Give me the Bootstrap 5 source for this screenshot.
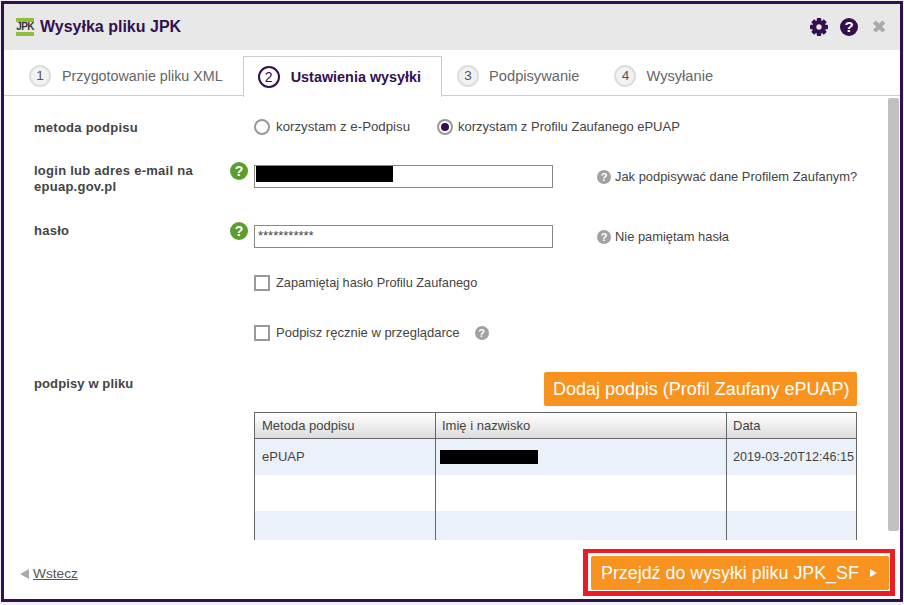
<!DOCTYPE html>
<html lang="pl">
<head>
<meta charset="utf-8">
<title>Wysyłka pliku JPK</title>
<link href="https://cdn.jsdelivr.net/npm/bootstrap@5.3.0/dist/css/bootstrap.min.css" rel="stylesheet">
<style>
html,body{height:100%;overflow:hidden}
body{background:#f1f0f3;font-family:"Liberation Sans",Arial,sans-serif;color:#444;font-size:13px;padding:1px 0 0 1px}
.okno{width:902px;height:601px;border:3px solid #32104f;background:#fff;display:flex;flex-direction:column;overflow:hidden}
.nagl{height:46px;flex:none;background:#e8e8e8;padding:0 13px 0 12px}
.logo{width:18px;height:18px;border-top:4px solid #8dbf3f;border-bottom:4px solid #8dbf3f;font:700 10px/10px "Liberation Sans",sans-serif;color:#333;display:flex;align-items:center;justify-content:center;letter-spacing:-.7px;margin-right:6px}
.tytul{font-size:16px;font-weight:700;color:#32104f;line-height:20px;margin:0}
.ikony{gap:12px}
.pytaj{width:18px;height:18px;border-radius:50%;background:#32104f;color:#fff;font:700 15px/18px "Liberation Sans",sans-serif;text-align:center}
.krzyz{color:#a9a9a9;font:700 18px/18px "DejaVu Sans",sans-serif;width:16px;text-align:center;margin-left:1px}
.zakladki{height:46px;flex:none;border-bottom:1px solid #ccc;padding:6px 0 0 9px}
.zakl{height:40px;padding:0 18px 0 16px;display:flex;align-items:center;color:#666;font-size:14.32px}
.zakl-dalej{font-size:14.65px;padding-right:19px}
.zakl-akt{border:1px solid #ccc;border-bottom:0;background:#fff;height:41px;color:#32104f;font-weight:700;margin-left:2px;margin-right:-1px;padding:0 20px 0 14px;font-size:14.4px}
.tekst{padding-top:1px}
.nr{width:22px;height:22px;border-radius:50%;border:2px solid #ddd;background:#f2f2f2;display:flex;align-items:center;justify-content:center;font-size:13.5px;font-weight:400;color:#555;margin-right:11px}
.zakl-dalej .nr{margin-right:10px}
.zakl-akt .nr{border-color:#32104f;background:#fff;color:#32104f;font-size:14px}
.srodek{height:444px;flex:none;overflow:hidden}
.tresc{flex:1;padding:21px 0 0 30px;min-width:0}
.suwak{width:12px;flex:none;padding:2px 1px 0 0}
.uchwyt{height:433px;background:#c1c1c1;border-radius:2px}
.wiersz{display:flex}
.etyk{width:196px;flex:none;font-weight:700;font-size:13px;letter-spacing:.26px;line-height:16px;color:#444}
.pomoc{width:24px;flex:none}
.zielony{width:18px;height:18px;border-radius:50%;background:#5b9e2d;color:#fff;font:700 14px/18px "Liberation Sans",sans-serif;text-align:center;display:block;margin-top:-3px}
.szary{display:inline-block;width:14px;height:14px;border-radius:50%;background:#a1a1a1;color:#fff;font:700 11px/14px "Liberation Sans",sans-serif;text-align:center;flex:none}
.pole{width:299px;height:23px;border:1px solid #888;padding:0 3px;font-size:13px;line-height:20px;color:#444;flex:none}
.czarny{background:#000;display:block}
.kryty{margin-left:-2px}
.rz1{height:20px;align-items:center}
.rz1 .etyk{padding-top:1px}
.rz2{margin-top:28px;height:60px}
.rz2 .etyk,.rz3 .etyk{margin-top:-3px;padding-top:1px}
.rz3,.rz4{height:50px}
.rz5{height:47px}
.rz6{height:40px}
.rz6 .etyk{letter-spacing:.12px}
.wybor{display:inline-flex;align-items:center;gap:6px;font-size:13px;line-height:16px}
.rz4 .wybor{font-size:12.75px}
.rz5 .szary{margin-left:9px!important}
.rz1 .wybor{font-size:13.25px}
.rz1 .drugi{margin-left:27px;gap:5px;font-size:13px}
.radio{width:16px;height:16px;border-radius:50%;border:2px solid #999;background:#fff;display:block;flex:none}
.radio-on{position:relative}
.radio-on::after{content:"";position:absolute;inset:2px;border-radius:50%;background:#32104f}
.check{width:16px;height:16px;border:2px solid #999;display:block;flex:none;background:#fff}
.boczny{margin-left:44px;padding-top:1px;gap:4px;font-size:12.9px;display:flex;align-items:center;height:22px;white-space:nowrap}
.pomar{background:#f7931e;border:0;border-radius:2px;color:#fff;font-size:18px;letter-spacing:-.02px;line-height:34px;height:34px;padding:0 8px 0 9px;white-space:nowrap;width:313px}
.pomar:hover{background:#f7931e;color:#fff}
.tabela{width:603px;table-layout:fixed;margin:0;border:1px solid #666;border-bottom:0;border-collapse:separate;border-spacing:0;color:#444;font-size:13px}
.tabela th{font-weight:400;height:26px;padding:0 7px;border-bottom:1px solid #666;border-right:1px solid #666;background:linear-gradient(#fff,#dcdcdc);vertical-align:middle;box-shadow:none;color:#444}
.tabela th:nth-child(2){padding-left:6px}
.tabela th:last-child{padding-left:6px}
.tabela td{height:36px;padding:0 7px;border:0;border-right:1px solid #666;vertical-align:middle;box-shadow:none;color:#444;background:#fff;white-space:nowrap}
.tabela td.dat{padding:0 0 0 6px;font-size:12.58px}
.tabela td.zakr{padding-left:4px}
.tabela th:last-child,.tabela td:last-child{border-right:0}
.tabela tr.nieb td{background:#ebf1f9}
.stopka{flex:1;padding:9px 5px 3px 16px}
.wstecz{color:#555;font-size:13.7px;gap:4px;margin-top:3px}
.wstecz a{color:#555}
.tri-l{width:0;height:0;border:5px solid transparent;border-right:9px solid #aaa;border-left:0}
.ramka{border:5px solid #ec1c24;border-top-width:4px;padding:3px 1px 1px 3px;background:#fff;height:47px;width:312px;display:flex}
.dalej{height:34px;width:298px;font-size:17.85px;line-height:34px;padding:0 0 0 10px;text-align:left;display:flex;align-items:center;background:#f7931e;border:0;border-radius:2px;color:#fff;white-space:nowrap}
.dalej:hover{background:#f7931e;color:#fff}
.tri-p{width:0;height:0;border:4.5px solid transparent;border-left:7px solid #fff;border-right:0;margin-left:11px}
</style>
</head>
<body>
<div class="okno">
  <div class="nagl d-flex align-items-center justify-content-between">
    <div class="d-flex align-items-center">
      <span class="logo">JPK</span>
      <h1 class="tytul">Wysyłka pliku JPK</h1>
    </div>
    <div class="ikony d-flex align-items-center">
      <svg width="18" height="18" viewBox="0 0 18 18" aria-hidden="true"><g fill="#32104f"><circle cx="9" cy="9" r="6.8"/><rect x="6.8" y="0" width="4.400" height="18" rx=".8"/><rect x="6.8" y="0" width="4.400" height="18" rx=".8" transform="rotate(45 9 9)"/><rect x="6.8" y="0" width="4.400" height="18" rx=".8" transform="rotate(90 9 9)"/><rect x="6.8" y="0" width="4.400" height="18" rx=".8" transform="rotate(135 9 9)"/></g><circle cx="9" cy="9" r="2.700" fill="#e8e8e8"/></svg>
      <span class="pytaj">?</span>
      <span class="krzyz">✖</span>
    </div>
  </div>
  <div class="zakladki d-flex">
    <div class="zakl"><span class="nr">1</span><span class="tekst">Przygotowanie pliku XML</span></div>
    <div class="zakl zakl-akt"><span class="nr">2</span><span class="tekst">Ustawienia wysyłki</span></div>
    <div class="zakl zakl-dalej"><span class="nr">3</span><span class="tekst">Podpisywanie</span></div>
    <div class="zakl zakl-dalej"><span class="nr">4</span><span class="tekst">Wysyłanie</span></div>
  </div>
  <div class="srodek d-flex">
    <div class="tresc">
      <div class="wiersz rz1">
        <div class="etyk">metoda podpisu</div>
        <div class="pomoc"></div>
        <label class="wybor"><span class="radio"></span>korzystam z e-Podpisu</label>
        <label class="wybor drugi"><span class="radio radio-on"></span>korzystam z Profilu Zaufanego ePUAP</label>
      </div>
      <div class="wiersz rz2">
        <div class="etyk">login lub adres e-mail na epuap.gov.pl</div>
        <div class="pomoc"><span class="zielony">?</span></div>
        <div class="pole"><span class="czarny kryty" style="width:137px;height:16px"></span></div>
        <div class="boczny"><span class="szary">?</span>Jak podpisywać dane Profilem Zaufanym?</div>
      </div>
      <div class="wiersz rz3">
        <div class="etyk">hasło</div>
        <div class="pomoc"><span class="zielony">?</span></div>
        <div class="pole">***********</div>
        <div class="boczny"><span class="szary">?</span>Nie pamiętam hasła</div>
      </div>
      <div class="wiersz rz4">
        <div class="etyk"></div><div class="pomoc"></div>
        <label class="wybor align-self-start"><span class="check"></span>Zapamiętaj hasło Profilu Zaufanego</label>
      </div>
      <div class="wiersz rz5">
        <div class="etyk"></div><div class="pomoc"></div>
        <label class="wybor align-self-start"><span class="check"></span>Podpisz ręcznie w przeglądarce<span class="szary ms-2">?</span></label>
      </div>
      <div class="wiersz rz6">
        <div class="etyk pt-1">podpisy w pliku</div>
        <div class="pomoc"></div>
        <div class="d-flex justify-content-end" style="width:603px"><button class="btn pomar" type="button">Dodaj podpis (Profil Zaufany ePUAP)</button></div>
      </div>
      <div class="wiersz">
        <div class="etyk"></div><div class="pomoc"></div>
        <table class="table tabela">
          <colgroup><col style="width:181px"><col style="width:291px"><col></colgroup>
          <thead><tr><th>Metoda podpisu</th><th>Imię i nazwisko</th><th>Data</th></tr></thead>
          <tbody>
            <tr class="nieb"><td>ePUAP</td><td class="zakr"><span class="czarny" style="width:98px;height:14px"></span></td><td class="dat">2019-03-20T12:46:15</td></tr>
            <tr><td></td><td></td><td></td></tr>
            <tr class="nieb"><td></td><td></td><td></td></tr>
          </tbody>
        </table>
      </div>
    </div>
    <div class="suwak"><div class="uchwyt"></div></div>
  </div>
  <div class="stopka d-flex align-items-center justify-content-between">
    <div class="wstecz d-flex align-items-center"><span class="tri-l"></span><a href="#">Wstecz</a></div>
    <div class="ramka"><button class="btn dalej" type="button">Przejdź do wysyłki pliku JPK_SF<span class="tri-p"></span></button></div>
  </div>
</div>
</body>
</html>
